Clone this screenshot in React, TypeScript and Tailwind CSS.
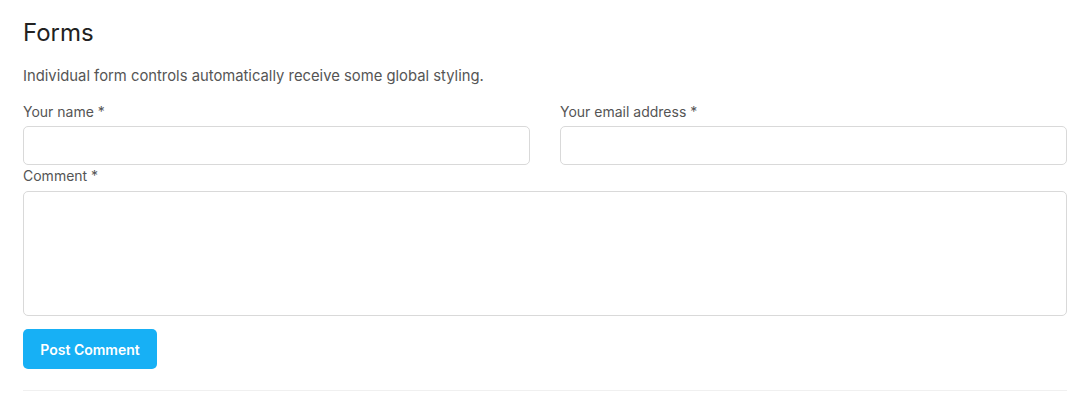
export default function App() {
  return (
    <div className="min-h-[399px] bg-white px-[23px] pt-[16px] font-['Inter',sans-serif]">
      <h2 className="text-[24px] leading-[34px] text-[#222]">Forms</h2>
      <p className="mt-[16px] text-[14.8px] leading-[20px] text-[#555]">
        Individual form controls automatically receive some global styling.
      </p>
      <form className="mt-[16px] flex flex-col" onSubmit={e => e.preventDefault()}>
        <div className="grid grid-cols-2 gap-[30px]">
          <label className="flex flex-col">
            <span className="text-[14px] leading-[20px] text-[#555]">Your name *</span>
            <input className="mt-[4px] h-[39px] rounded-[5px] border border-[#d9d9d9] bg-white px-3" />
          </label>
          <label className="flex flex-col">
            <span className="text-[14px] leading-[20px] text-[#555]">Your email address *</span>
            <input className="mt-[4px] h-[39px] rounded-[5px] border border-[#d9d9d9] bg-white px-3" />
          </label>
        </div>
        <label className="mt-[1px] flex flex-col">
          <span className="text-[14px] leading-[20px] text-[#555]">Comment *</span>
          <textarea className="mt-[5px] h-[125px] resize-none rounded-[5px] border border-[#d9d9d9] bg-white px-3 py-2" />
        </label>
        <div className="mt-[13px]">
          <button
            type="submit"
            className="h-[40px] w-[134px] rounded-[5px] bg-[#17b0f5] text-[14px] font-semibold text-white"
          >
            Post Comment
          </button>
        </div>
        <hr className="mt-[21px] border-t border-[#f0f0f0]" />
      </form>
    </div>
  );
}
